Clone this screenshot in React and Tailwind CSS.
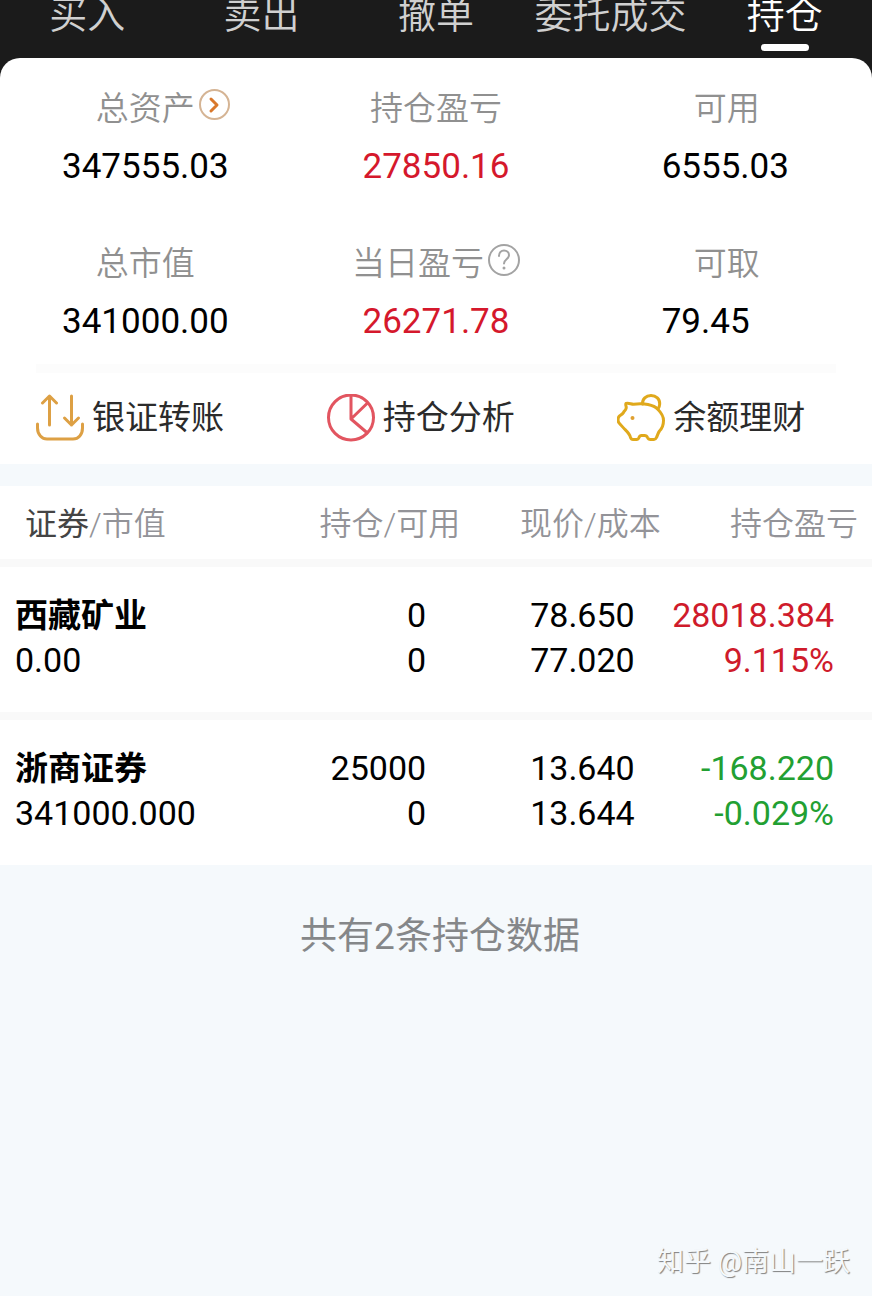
import { ChevronRight } from "lucide-react";

const TABS = ["买入", "卖出", "撤单", "委托成交", "持仓"];

const HOLDINGS = [
    { name: "西藏矿业", value: "0.00", qty: "0", usable: "0", price: "78.650", cost: "77.020", profit: "28018.384", rate: "9.115%", up: true },
    { name: "浙商证券", value: "341000.000", qty: "25000", usable: "0", price: "13.640", cost: "13.644", profit: "-168.220", rate: "-0.029%", up: false },
];

function TransferIcon() {
    return (
        <svg viewBox="0 0 48 48" className="size-12" fill="none" stroke="#dda044" strokeWidth="3" strokeLinecap="round" strokeLinejoin="round" aria-hidden="true">
            <path d="M13.500 31V2M6.500 9l7-7 7 7" />
            <path d="M35.500 2V31M28.500 24l7 7 7-7" />
            <path d="M1.500 30v4C1.500 40.500 6 45 11 45h26c5.500 0 9.500-4.500 9.500-11v-4" />
        </svg>
    );
}

function PieIcon() {
    return (
        <svg viewBox="0 0 48 48" className="size-12" fill="none" stroke="#e25560" strokeWidth="3" strokeLinejoin="round" aria-hidden="true">
            <circle cx="24" cy="23.500" r="22.500" />
            <path d="M24 1V25l17 14.500M24 25L40.500 9" />
        </svg>
    );
}

function PiggyIcon() {
    return (
        <svg viewBox="0 0 48 48" className="size-12" fill="none" stroke="#e0a91c" strokeWidth="3" strokeLinecap="round" strokeLinejoin="round" aria-hidden="true">
            <path d="M9 9.500c2.500-.8 5 .7 7.500.7 5-.5 9.500-.7 14.500.3 4 .8 7.500 2.200 10 5 3.200 3.200 5.500 6.500 5.500 11 0 4.500-1.500 8-4 10.500-1.500 2-2 4.500-3 6.500-.6 1.400-1.300 2-2.500 2h-3.500c-1.500 0-2.500-.8-3-2-.6-1.600-1.500-2-3-2h-3c-1.500 0-2 .6-2.500 2-.5 1.300-1.200 2-2.500 2h-3.500c-1.300 0-2-.6-2.500-2-.7-3.500-3.500-6-6-8.500-2-2-3.500-4-5-5.500-1-1-1.500-2-1.500-3.500 0-2 .3-3 1.500-4 2-1.300 3.300-2 4-3.500.7-1.500 2.500-2.500 2.500-4C10 12.500 8 11.500 9 9.500z" />
            <path d="M25.500 10c-.3-5 3.500-8.500 8.500-8.500s9 3.500 8.700 8.500c0 1.800-.7 3.300-1.700 5" />
            <circle cx="15.500" cy="24" r="2" fill="#e0a030" stroke="none" />
        </svg>
    );
}

function HelpIcon() {
    return (
        <svg viewBox="0 0 32 32" className="size-8" fill="none" stroke="#a3a3a3" strokeWidth="2" strokeLinecap="round" aria-hidden="true">
            <circle cx="16" cy="16" r="15" />
            <path d="M11 12c0-3.300 2.200-5.500 5-5.500s5 2 5 4.700c0 4-5 4.100-5 8.300" />
            <circle cx="16" cy="24" r="1.500" fill="#a3a3a3" stroke="none" />
        </svg>
    );
}

const ACTIONS = [
    { label: "银证转账", Icon: TransferIcon },
    { label: "持仓分析", Icon: PieIcon },
    { label: "余额理财", Icon: PiggyIcon },
];

function Stat({ label, value, extra, valueClass = "text-center text-black" }) {
    return (
        <div className="flex flex-col items-center">
            <dt className="relative flex h-10 items-center gap-1 text-[33px] font-[350] text-[#909090]">
                {label}
                {extra}
            </dt>
            <dd className={`mt-[14px] text-[35px] leading-[48px] ${valueClass}`}>{value}</dd>
        </div>
    );
}

export default function App() {
    return (
        <div className="flex min-h-screen flex-col bg-[#f5f9fc] font-[Roboto,'Noto_Sans_CJK_SC',sans-serif]" lang="zh-CN">
            <header className="bg-[#1b1b1b]">
                <nav className="grid h-[58px] grid-cols-5">
                    {TABS.map((tab) => {
                        const active = tab === "持仓";
                        return (
                            <a
                                key={tab}
                                href="#"
                                aria-current={active ? "page" : undefined}
                                className={`flex flex-col items-center text-[38px] leading-[30px] font-[350] whitespace-nowrap ${active ? "text-white" : "text-[#d0d0d0]"}`}
                            >
                                {tab}
                                {active && <span className="mt-3.5 h-[7px] w-12 rounded-full bg-white" />}
                            </a>
                        );
                    })}
                </nav>
                <section className="rounded-t-[20px] bg-white pt-[31px]">
                    <dl className="grid grid-cols-3 gap-y-[53px]">
                        <Stat
                            label="总资产"
                            value="347555.03"
                            extra={
                                <button className="absolute top-0 left-full ml-1 flex size-[31px] items-center justify-center rounded-full border-2 border-[#d5b494] text-[#d9782c]" aria-label="总资产详情">
                                    <ChevronRight className="size-6" strokeWidth={3} />
                                </button>
                            }
                        />
                        <Stat label="持仓盈亏" value="27850.16" valueClass="text-center text-[#d5182c]" />
                        <Stat label="可用" value="6555.03" valueClass="w-[130px] text-left text-black" />
                        <Stat label="总市值" value="341000.00" />
                        <Stat
                            label="当日盈亏"
                            value="26271.78"
                            valueClass="text-center text-[#d5182c]"
                            extra={<button className="self-start" aria-label="当日盈亏说明"><HelpIcon /></button>}
                        />
                        <Stat label="可取" value="79.45" valueClass="w-[130px] text-left text-black" />
                    </dl>
                    <hr className="mx-9 mt-[18px] border-t-[9px] border-[#fcfcfc]" />
                    <div className="grid grid-cols-3 pt-[19px] pb-5">
                        {ACTIONS.map(({ label, Icon }) => (
                            <button key={label} className="flex h-[52px] items-center gap-2 pl-9 text-[33px] whitespace-nowrap text-[#2b2b2b]">
                                <Icon />
                                {label}
                            </button>
                        ))}
                    </div>
                </section>
            </header>

            <table className="mt-[22px] w-full table-fixed bg-white text-right text-[34px] leading-[45px] text-black">
                <thead>
                    <tr className="border-b-8 border-[#f9f9f9] text-[32px] text-[#939398]">
                        <th className="w-[36%] pt-4 pb-3 pl-[25px] text-left font-[350]"><span className="font-normal text-[#444]">证券</span>/市值</th>
                        <th className="w-[17%] pt-4 pr-0.5 pb-3 font-[350]">持仓/可用</th>
                        <th className="w-[23%] pt-4 pr-0.5 pb-3 font-[350]">现价/成本</th>
                        <th className="w-[24%] pt-4 pr-[14px] pb-3 font-[350]">持仓盈亏</th>
                    </tr>
                </thead>
                <tbody>
                    {HOLDINGS.map((h) => (
                        <tr key={h.name} className="border-b-8 border-[#f9f9f9] last:border-b-0">
                            <td className="pt-[26px] pb-[29px] pl-[15px] text-left">
                                <div className="text-[33px] font-bold">{h.name}</div>
                                <div>{h.value}</div>
                            </td>
                            <td className="pt-[26px] pr-9 pb-[29px]">
                                <div>{h.qty}</div>
                                <div>{h.usable}</div>
                            </td>
                            <td className="pt-[26px] pr-7 pb-[29px]">
                                <div>{h.price}</div>
                                <div>{h.cost}</div>
                            </td>
                            <td className={`pt-[26px] pr-[38px] pb-[29px] ${h.up ? "text-[#cf1b2b]" : "text-[#22a032]"}`}>
                                <div>{h.profit}</div>
                                <div>{h.rate}</div>
                            </td>
                        </tr>
                    ))}
                </tbody>
            </table>

            <p className="mt-12 pl-2 text-center text-[37px] leading-[48px] text-[#858789]">共有{HOLDINGS.length}条持仓数据</p>

            <footer className="mt-auto pr-[22px] pb-[14px] text-right text-[27px] leading-10 text-[#f5f9fc] [text-shadow:1px_1px_1px_#808080]">知乎 @南山一跃</footer>
        </div>
    );
}
